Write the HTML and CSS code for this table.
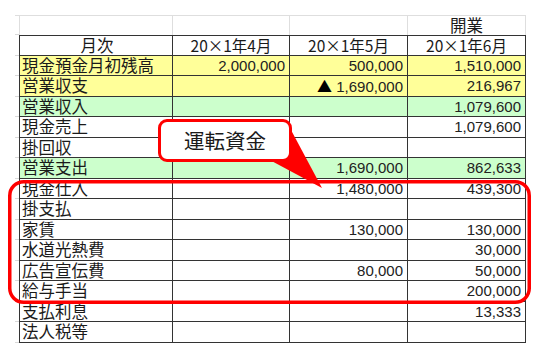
FILE: index.html
```html
<!DOCTYPE html>
<html lang="ja">
<head>
<meta charset="utf-8">
<link rel="stylesheet" href="styles.css">
</head>
<body>
<div class="page">
  <div class="sheet">
    <div class="row blank">
      <div class="g"></div><div class="c l"></div><div class="c"></div><div class="c"></div><div class="c t">開業</div>
    </div>
    <div class="row head">
      <div class="g"></div><div class="c l ctr">月次</div><div class="c ctr">20×1年4月</div><div class="c ctr">20×1年5月</div><div class="c ctr">20×1年6月</div>
    </div>
    <div class="row yel">
      <div class="g"></div><div class="c l">現金預金月初残高</div><div class="c n">2,000,000</div><div class="c n">500,000</div><div class="c n">1,510,000</div>
    </div>
    <div class="row yel">
      <div class="g"></div><div class="c l">営業収支</div><div class="c n"></div><div class="c n"><span class="tri">▲</span> 1,690,000</div><div class="c n">216,967</div>
    </div>
    <div class="row grn">
      <div class="g"></div><div class="c l">営業収入</div><div class="c n"></div><div class="c n"></div><div class="c n">1,079,600</div>
    </div>
    <div class="row">
      <div class="g"></div><div class="c l">現金売上</div><div class="c n"></div><div class="c n"></div><div class="c n">1,079,600</div>
    </div>
    <div class="row">
      <div class="g"></div><div class="c l">掛回収</div><div class="c n"></div><div class="c n"></div><div class="c n"></div>
    </div>
    <div class="row grn">
      <div class="g"></div><div class="c l">営業支出</div><div class="c n"></div><div class="c n">1,690,000</div><div class="c n">862,633</div>
    </div>
    <div class="row">
      <div class="g"></div><div class="c l">現金仕入</div><div class="c n"></div><div class="c n">1,480,000</div><div class="c n">439,300</div>
    </div>
    <div class="row">
      <div class="g"></div><div class="c l">掛支払</div><div class="c n"></div><div class="c n"></div><div class="c n"></div>
    </div>
    <div class="row">
      <div class="g"></div><div class="c l">家賃</div><div class="c n"></div><div class="c n">130,000</div><div class="c n">130,000</div>
    </div>
    <div class="row">
      <div class="g"></div><div class="c l">水道光熱費</div><div class="c n"></div><div class="c n"></div><div class="c n">30,000</div>
    </div>
    <div class="row">
      <div class="g"></div><div class="c l">広告宣伝費</div><div class="c n"></div><div class="c n">80,000</div><div class="c n">50,000</div>
    </div>
    <div class="row">
      <div class="g"></div><div class="c l">給与手当</div><div class="c n"></div><div class="c n"></div><div class="c n">200,000</div>
    </div>
    <div class="row">
      <div class="g"></div><div class="c l">支払利息</div><div class="c n"></div><div class="c n"></div><div class="c n">13,333</div>
    </div>
    <div class="row">
      <div class="g"></div><div class="c l">法人税等</div><div class="c n"></div><div class="c n"></div><div class="c n"></div>
    </div>
  </div>

  <svg class="marks" width="540" height="350" viewBox="0 0 540 350">
    <rect x="9.75" y="181.75" width="519.5" height="120.5" rx="14" ry="14" fill="none" stroke="#ff0000" stroke-width="3.5"/>
    <polygon points="266,158 291,130 322,188" fill="#ff0000"/>
  </svg>
  <div class="callout">運転資金</div>
</div>
</body>
</html>
```
FILE: styles.css
```css
html, body {
  margin: 0;
  padding: 0;
  background: #ffffff;
}
.page {
  position: relative;
  width: 540px;
  height: 350px;
  overflow: hidden;
  font-family: "Noto Sans CJK JP", sans-serif;
  color: #1a1a1a;
}
.sheet {
  padding: 15px 0 0 15px;
  display: flex;
  flex-direction: column;
}
.row {
  display: grid;
  grid-template-columns: 4px 154px 117px 118px 118px;
  height: 20.5px;
}
.row.blank {
  height: 20px;
}
.c, .g {
  box-sizing: border-box;
  border-bottom: 1px solid #333;
  border-right: 1px solid #333;
  font-size: 16.5px;
  line-height: 19px;
  white-space: nowrap;
  overflow: hidden;
}
.c.l {
  border-left: 1px solid #333;
  padding-left: 2px;
}
.g {
  border-right: none;
  border-bottom: 1px solid #d9d9d9;
}
.blank .c {
  border-top: 1px solid #dedede;
  border-right: 1px solid #dedede;
  border-bottom: none;
}
.blank .c.l {
  border-left: 1px solid #dedede;
}
.blank .g {
  border-top: 1px solid #dedede;
  border-bottom: 1px solid #d9d9d9;
}
.blank .t {
  text-align: center;
  line-height: 19px;
}
.head .c {
  border-top: 1px solid #333;
}
.ctr {
  text-align: center;
}
.head .ctr + .ctr {
  font-size: 15.5px;
}
.n {
  text-align: right;
  padding-right: 4px;
  font-family: "Liberation Sans", "Noto Sans CJK JP", sans-serif;
  font-size: 15px;
  color: #222;
}
.tri {
  font-family: "Noto Sans CJK JP", sans-serif;
  font-size: 15px;
  color: #000;
}
.yel .c {
  background: #ffff99;
}
.grn .c {
  background: #ccffcc;
}
.marks {
  position: absolute;
  left: 0;
  top: 0;
  pointer-events: none;
}
.callout {
  position: absolute;
  left: 158px;
  top: 119px;
  width: 134px;
  height: 43px;
  box-sizing: border-box;
  border: 3.5px solid #ff0000;
  border-radius: 9px;
  background: #ffffff;
  display: flex;
  align-items: center;
  justify-content: center;
  font-size: 20.5px;
  color: #1a1a1a;
  padding-bottom: 1px;
}
```
